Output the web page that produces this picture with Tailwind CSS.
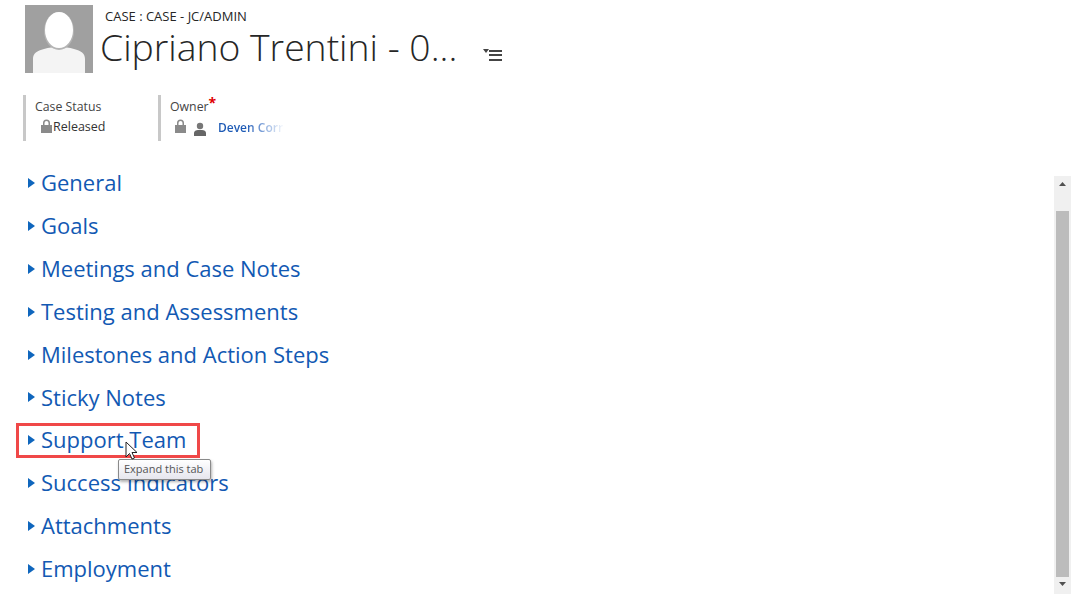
<!DOCTYPE html>
<html lang="en">
<head>
  <meta charset="UTF-8" />
  <title>Case</title>
  <script src="https://cdn.jsdelivr.net/npm/@tailwindcss/browser@4"></script>
</head>
<body class="bg-white h-[594px] w-[1077px] overflow-hidden relative font-['Open_Sans',sans-serif]">

  <!-- header -->
  <div class="flex pl-[25px] pt-[5px] h-[95px]">
    <svg class="w-[68px] h-[68px] shrink-0" viewBox="0 0 68 68">
      <rect width="68" height="68" fill="#a0a0a0" />
      <path d="M8 68V54c0-6 4-8 11-10 5-1.500 9-2 15-2s10 .5 15 2c7 2 11 4 11 10v14z" fill="#f4f4f4" />
      <ellipse cx="34" cy="26" rx="15" ry="19" fill="#b4b4b4" />
      <ellipse cx="34" cy="25" rx="14" ry="18" fill="#fff" />
    </svg>
    <div class="ml-[7px]">
      <div class="text-[13px] leading-[16px] pl-[5px] pt-[3px] text-[#262626]">CASE : CASE - JC/ADMIN</div>
      <div class="flex items-center h-[38px] mt-[4px]">
        <span class="text-[37.300px] leading-[38px] font-light text-[#262626] whitespace-nowrap">Cipriano Trentini - 0...</span>
        <svg class="w-[20px] h-[16px] ml-[26px] mt-[14px]" viewBox="0 0 20 16">
          <path d="M0 3h6l-3 4z" fill="#444" />
          <path d="M6 4h13v2H6zM6 8h13v2H6zM6 13h13v2H6z" fill="#444" />
        </svg>
      </div>
    </div>
  </div>

  <!-- summary fields -->
  <div class="flex pl-[23px] h-[46px]">
    <div class="w-[135px] border-l-[3px] border-[#c8c8c8] pl-[9px] pt-[3px]">
      <div class="text-[12.300px] leading-[17px] text-[#444]">Case Status</div>
      <div class="flex items-center pl-[6px] mt-[4px] text-[12.500px] leading-[16px] text-[#333]">
        <svg class="w-[11px] h-[14px] -mt-[3px] shrink-0" viewBox="0 0 11 14"><path d="M2 6V4a3.500 3.500 0 0 1 7 0v2h2v8H0V6zM3.500 6h4V4a2 2 0 0 0-4 0z" fill="#8a8a8a" /></svg>
        <span class="ml-[1px]">Released</span>
      </div>
    </div>
    <div class="w-[135px] border-l-[3px] border-[#c8c8c8] pl-[9px] pt-[3px]">
      <div class="text-[12.300px] leading-[17px] text-[#444]">Owner<span class="text-[#e00000] font-bold text-[14px] leading-[10px] align-top">*</span></div>
      <div class="flex items-center pl-[5px] mt-[5px] text-[12px] leading-[16px]">
        <svg class="w-[11px] h-[14px] -mt-[4px] shrink-0" viewBox="0 0 11 14"><path d="M2 6V4a3.500 3.500 0 0 1 7 0v2h2v8H0V6zM3.500 6h4V4a2 2 0 0 0-4 0z" fill="#8a8a8a" /></svg>
        <svg class="w-[12px] h-[14px] ml-[8px] mt-[2px] shrink-0" viewBox="0 0 12 14"><circle cx="6" cy="4" r="3.200" fill="#777" /><path d="M0 14v-3c0-2 2-3 4-3h4c2 0 4 1 4 3v3z" fill="#666" /></svg>
        <span class="ml-[12px] w-[70px] overflow-hidden whitespace-nowrap font-semibold text-transparent bg-clip-text bg-linear-to-r from-[#1d5ab5] from-40% to-white to-95%">Deven Corr</span>
      </div>
    </div>
  </div>

  <!-- tabs + scrollbar -->
  <div class="flex h-[432px] mt-[21px]">
    <ul class="flex-1 pl-[28px] -mt-[1px] text-[#1259b3] text-[22px]">
      <li class="flex items-center h-[43px]"><svg class="w-[7px] h-[10px] mr-[6px]" viewBox="0 0 7 10"><path d="M0 0l7 5-7 5z" fill="#0f66bd" /></svg>General</li>
      <li class="flex items-center h-[43px]"><svg class="w-[7px] h-[10px] mr-[6px]" viewBox="0 0 7 10"><path d="M0 0l7 5-7 5z" fill="#0f66bd" /></svg>Goals</li>
      <li class="flex items-center h-[43px]"><svg class="w-[7px] h-[10px] mr-[6px]" viewBox="0 0 7 10"><path d="M0 0l7 5-7 5z" fill="#0f66bd" /></svg>Meetings and Case Notes</li>
      <li class="flex items-center h-[43px]"><svg class="w-[7px] h-[10px] mr-[6px]" viewBox="0 0 7 10"><path d="M0 0l7 5-7 5z" fill="#0f66bd" /></svg>Testing and Assessments</li>
      <li class="flex items-center h-[43px]"><svg class="w-[7px] h-[10px] mr-[6px]" viewBox="0 0 7 10"><path d="M0 0l7 5-7 5z" fill="#0f66bd" /></svg>Milestones and Action Steps</li>
      <li class="flex items-center h-[42px]"><svg class="w-[7px] h-[10px] mr-[6px]" viewBox="0 0 7 10"><path d="M0 0l7 5-7 5z" fill="#0f66bd" /></svg>Sticky Notes</li>
      <li class="flex items-center h-[43px]"><svg class="w-[7px] h-[10px] mr-[6px]" viewBox="0 0 7 10"><path d="M0 0l7 5-7 5z" fill="#0f66bd" /></svg>Support Team</li>
      <li class="flex items-center h-[43px]"><svg class="w-[7px] h-[10px] mr-[6px]" viewBox="0 0 7 10"><path d="M0 0l7 5-7 5z" fill="#0f66bd" /></svg>Success Indicators</li>
      <li class="flex items-center h-[43px]"><svg class="w-[7px] h-[10px] mr-[6px]" viewBox="0 0 7 10"><path d="M0 0l7 5-7 5z" fill="#0f66bd" /></svg>Attachments</li>
      <li class="flex items-center h-[43px]"><svg class="w-[7px] h-[10px] mr-[6px]" viewBox="0 0 7 10"><path d="M0 0l7 5-7 5z" fill="#0f66bd" /></svg>Employment</li>
    </ul>
    <div class="w-[17px] mr-[6px] mt-[14px] h-[418px] bg-[#f0f0f0] flex flex-col items-center">
      <svg class="w-[7px] h-[4px] mt-[6px] shrink-0" viewBox="0 0 7 4"><path d="M3.500 0L7 4H0z" fill="#505050" /></svg>
      <div class="w-[13px] h-[366px] mt-[25px] bg-[#bcbcbc]"></div>
      <svg class="w-[7px] h-[4px] mt-[5px] shrink-0" viewBox="0 0 7 4"><path d="M0 0h7L3.500 4z" fill="#505050" /></svg>
    </div>
  </div>

  <!-- annotation, tooltip, cursor -->
  <div class="absolute left-[16px] top-[423px] w-[184px] h-[35px] border-[3px] border-[#f04848]"></div>
  <div class="absolute left-[118px] top-[459px] w-[93px] h-[21px] pl-[5px] flex items-center text-[11px] text-[#555] whitespace-nowrap rounded-[2px] border border-[#8a8a8a] bg-linear-to-b from-white to-[#e6e6ee] shadow-[1px_2px_3px_rgba(0,0,0,0.3)]">Expand this tab</div>
  <svg class="absolute left-[125px] top-[441px] w-[13px] h-[19px]" viewBox="0 0 13 19">
    <path d="M1 1v15l3.500-3.500 2.500 5.500 2.500-1-2.500-5.500h5z" fill="#fff" stroke="#222" stroke-width="1" />
  </svg>
</body>
</html>
